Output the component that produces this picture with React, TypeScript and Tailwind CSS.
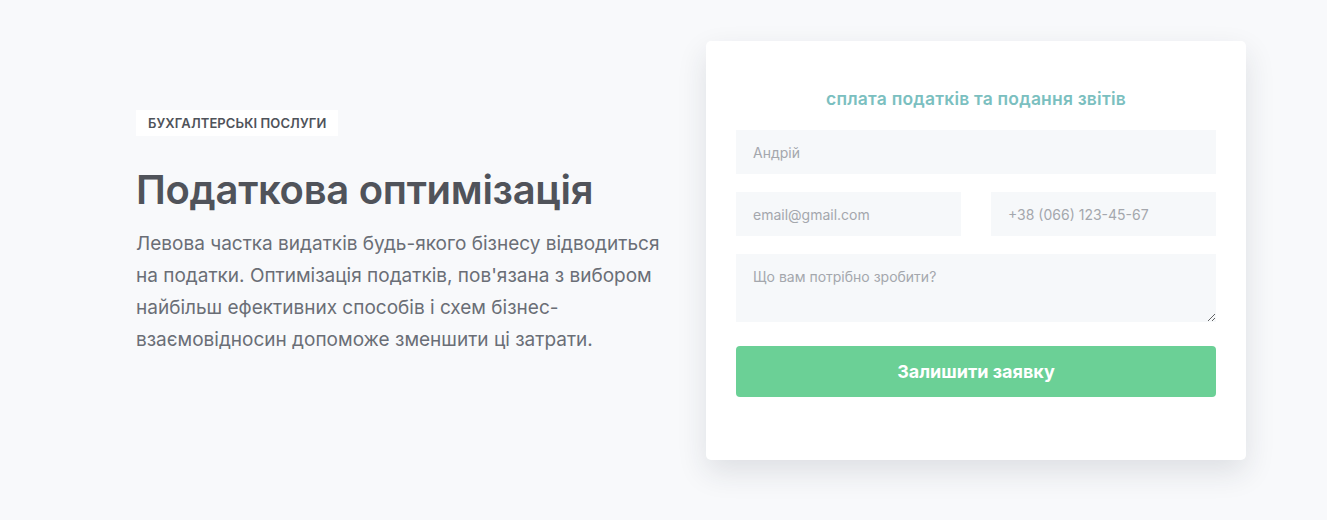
export default function App() {
  return (
    <div className="w-full h-[520px] bg-[#f8f9fb] font-['Inter','Liberation_Sans',sans-serif] overflow-hidden">
      <div className="flex items-start pl-[136px]">
        <div className="w-[570px] pt-[110px] pr-[30px]">
          <span className="inline-block bg-white px-[12px] h-[26px] leading-[26px] text-[13px] font-semibold text-[#4f535a] uppercase tracking-[0.1px]">
            Бухгалтерські послуги
          </span>
          <h1 className="mt-[30px] text-[40px] leading-[48px] font-semibold text-[#50535a] tracking-[-0.3px]">
            Податкова оптимізація
          </h1>
          <p className="mt-[14px] text-[19px] leading-[32px] text-[#6a6e76] tracking-[0px]">
            Левова частка видатків будь-якого бізнесу відводиться на податки. Оптимізація податків, пов'язана з вибором найбільш ефективних способів і схем бізнес-взаємовідносин допоможе зменшити ці затрати.
          </p>
        </div>
        <div className="mt-[41px] w-[540px] h-[419px] bg-white rounded-[5px] shadow-[0_12px_30px_rgba(30,40,60,0.12)] px-[30px] pt-[46px]">
          <h3 className="text-center text-[17.5px] leading-[24px] font-semibold text-[#7bbfc0] tracking-[0.2px]">
            сплата податків та подання звітів
          </h3>
          <form className="mt-[19px] flex flex-col">
            <input
              placeholder="Андрій"
              className="h-[44px] w-full bg-[#f6f8fa] px-[17px] text-[14px] placeholder:text-[#a4a7ad] outline-none"
            />
            <div className="mt-[18px] flex gap-[30px]">
              <input
                placeholder="email@gmail.com"
                className="h-[44px] w-[225px] bg-[#f6f8fa] px-[17px] text-[14px] placeholder:text-[#a4a7ad] outline-none"
              />
              <input
                placeholder="+38 (066) 123-45-67"
                className="h-[44px] w-[225px] bg-[#f6f8fa] px-[17px] text-[14px] placeholder:text-[#a4a7ad] outline-none"
              />
            </div>
            <textarea
              placeholder="Що вам потрібно зробити?"
              className="mt-[18px] h-[68px] w-full bg-[#f6f8fa] px-[17px] py-[12px] text-[14px] placeholder:text-[#a4a7ad] outline-none"
            />
            <button
              type="button"
              className="mt-[24px] h-[51px] w-full rounded-[4px] bg-[#6bd096] text-white text-[18px] font-bold"
            >
              Залишити заявку
            </button>
          </form>
        </div>
      </div>
    </div>
  );
}
